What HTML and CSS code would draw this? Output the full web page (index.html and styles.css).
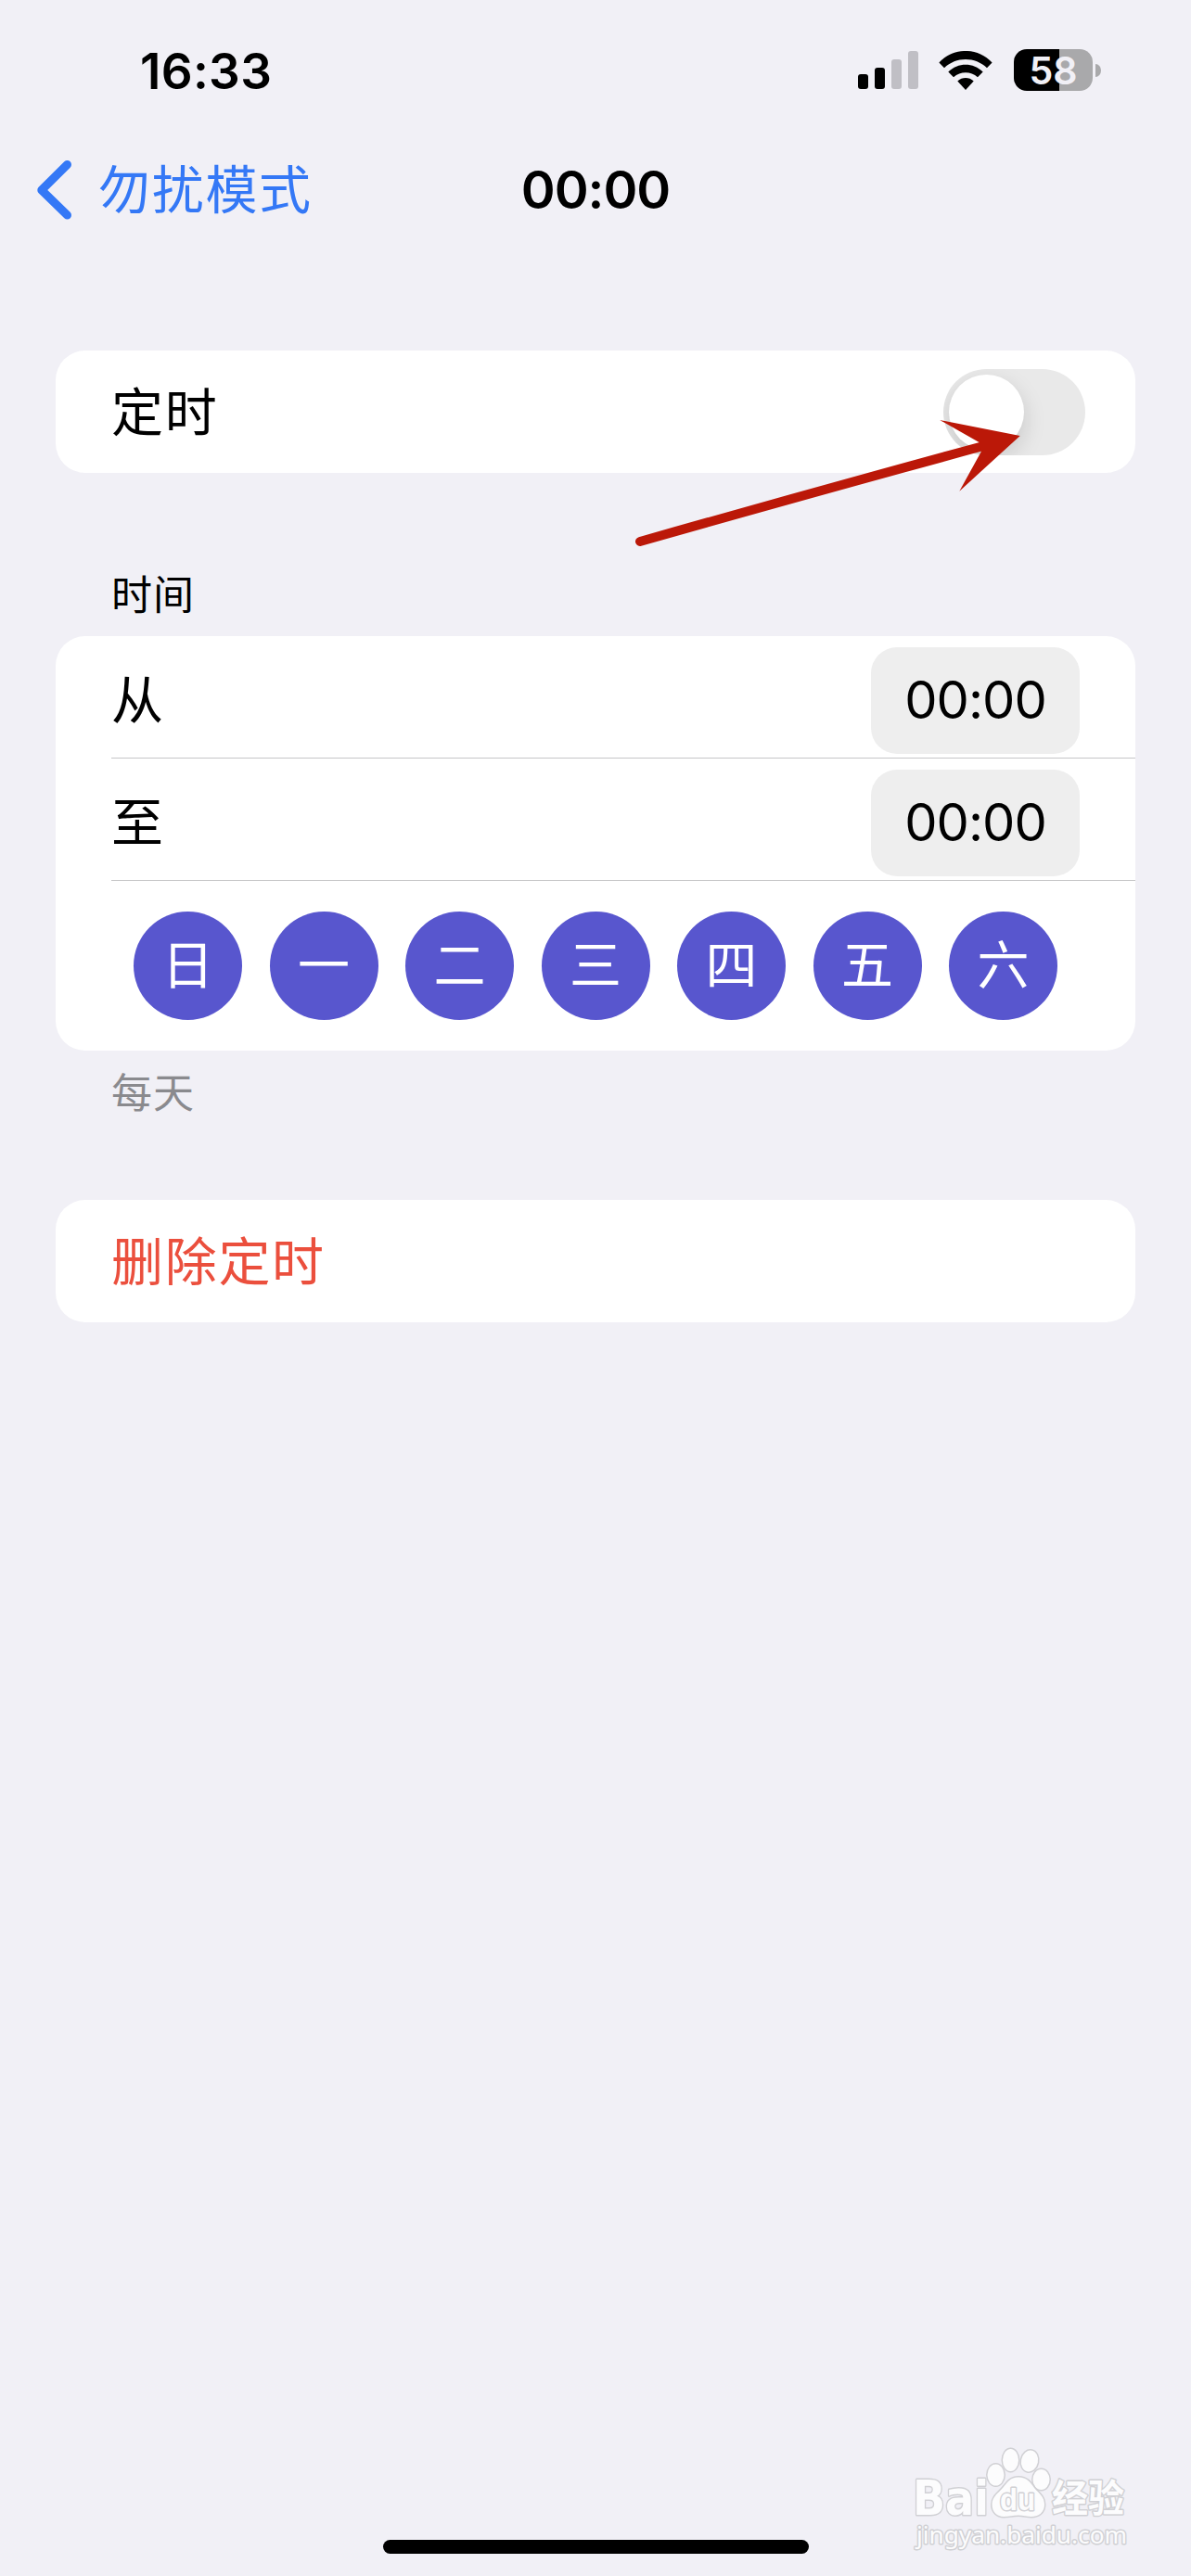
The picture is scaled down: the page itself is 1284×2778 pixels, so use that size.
FILE: index.html
```html
<!DOCTYPE html>
<html lang="zh-CN">
<head>
    <meta charset="UTF-8">
    <title>勿扰模式</title>
    <link rel="stylesheet" href="styles.css">
</head>
<body>
    <div class="status-bar">
        <span class="clock">16:33</span>
        <div class="status-icons">
            <svg class="signal" width="65" height="41" viewBox="0 0 65 41">
                <rect x="0" y="25" width="11" height="16" rx="3"/>
                <rect x="18" y="18" width="11" height="23" rx="3"/>
                <rect class="dim" x="36" y="9" width="11" height="32" rx="3"/>
                <rect class="dim" x="54" y="0" width="11" height="41" rx="3"/>
            </svg>
            <svg class="wifi" width="58" height="42" viewBox="0 0 58 42">
                <path d="M0.4 12.4C16-4.2 42-4.2 57.6 12.4L52 18.2C39.500 5.800 18.500 5.800 6 18.200Z"/>
                <path d="M10.300 22.500C20.800 12 37.200 12 47.700 22.500L42 28.300C34.500 21.500 23.500 21.500 16 28.300Z"/>
                <path d="M20.300 32.500C25.300 27.900 32.700 27.900 37.700 32.500L29 42Z"/>
            </svg>
            <div class="battery"><span>58</span></div>
            <div class="battery-cap"></div>
        </div>
    </div>

    <header class="nav">
        <a class="back">
            <svg width="38" height="64" viewBox="0 0 38 64"><path d="M32.500 4.500L4.800 32L32.500 59"/></svg>
            <span>勿扰模式</span>
        </a>
        <h1>00:00</h1>
    </header>

    <main>
        <section class="card row">
            <span>定时</span>
            <div class="switch"><div class="knob"></div></div>
        </section>

        <h2 class="section-title">时间</h2>
        <section class="card">
            <div class="row line">
                <span class="label">从</span>
                <span class="time">00:00</span>
            </div>
            <div class="row line">
                <span class="label">至</span>
                <span class="time">00:00</span>
            </div>
            <div class="days">
                <span>日</span>
                <span>一</span>
                <span>二</span>
                <span>三</span>
                <span>四</span>
                <span>五</span>
                <span>六</span>
            </div>
        </section>
        <p class="note">每天</p>

        <section class="card row delete">
            <span>删除定时</span>
        </section>
    </main>

    <!-- 指向开关的箭头 -->
    <svg class="arrow" width="420" height="150" viewBox="0 0 420 150">
        <path class="shaft" d="M10 134Q200 80 380 31"/>
        <path class="head" d="M419.700 20L333.200 3L376 27.300L378 36.700L354.300 79.700Z"/>
    </svg>

    <svg class="watermark" width="250" height="130" viewBox="0 0 250 130">
        <g class="mark">
            <text class="brand" x="4" y="81.500" textLength="82" lengthAdjust="spacingAndGlyphs">Bai</text>
            <ellipse cx="93.500" cy="39" rx="9" ry="11.500"/>
            <ellipse cx="109.500" cy="23" rx="8.500" ry="12"/>
            <ellipse cx="130" cy="24" rx="9" ry="11.500" transform="rotate(12 130 24)"/>
            <ellipse cx="142.500" cy="44" rx="9" ry="11"/>
            <path d="M118 41.500C127 41.500 131 47 135 53C140 59 146 62 146 71C146 80 139 84 132 84C127 84 123 82.500 118 82.500C112 82.500 108 84 102 84C95 84 89.500 79 89.500 71C89.500 62 97 58 101 53C106 47 109 41.500 118 41.500Z"/>
            <text class="du" x="98" y="77" textLength="38" lengthAdjust="spacingAndGlyphs">du</text>
            <text class="cn" x="154" y="78.500" textLength="78" lengthAdjust="spacingAndGlyphs">经验</text>
            <text class="site" x="8" y="113" textLength="227" lengthAdjust="spacingAndGlyphs">jingyan.baidu.com</text>
        </g>
    </svg>

    <div class="home-bar"></div>
</body>
</html>
```

FILE: styles.css
```css
* { box-sizing: border-box; }
body {
    position: relative;
    display: flex;
    flex-direction: column;
    width: 1284px;
    height: 2778px;
    margin: 0;
    overflow: hidden;
    background: #f1f0f6;
    color: #000;
    font-family: Inter, "Noto Sans CJK SC", sans-serif;
    font-size: 56px;
}
h1, h2, p { margin: 0; font-weight: 400; }

/* 状态栏 */
.status-bar {
    display: flex;
    justify-content: space-between;
    height: 150px;
    padding: 53px 97px 0 151px;
}
.clock { height: 48px; line-height: 49px; font-size: 53px; font-weight: 600; letter-spacing: 0.3px; }
.status-icons { display: flex; align-items: center; height: 45px; }
.signal { margin-right: 22px; }
.signal .dim { fill: #c0bfc5; }
.wifi { margin-right: 23px; }
.battery {
    width: 85px;
    height: 45px;
    border-radius: 14px;
    background: linear-gradient(to right, #000 49px, #a9a9ab 49px);
    color: #f1f0f6;
    font-size: 41px;
    font-weight: 600;
    line-height: 46px;
    text-align: center;
}
.battery-cap { width: 6px; height: 14px; margin-left: 3px; border-radius: 0 6px 6px 0 / 0 7px 7px 0; background: #a9a9ab; }

/* 导航栏 */
.nav {
    display: grid;
    grid-template-columns: 1fr auto 1fr;
    align-items: center;
    height: 110px;
    padding: 0 40px;
}
.back { display: flex; align-items: center; gap: 28px; color: #3478f6; letter-spacing: 1.7px; line-height: 80px; }
.back path { fill: none; stroke: #3478f6; stroke-width: 9; stroke-linecap: round; stroke-linejoin: round; }
.nav h1 { font-size: 56px; font-weight: 600; letter-spacing: -1px; line-height: 80px; }

/* 列表 */
main { padding: 118px 60px 0; }
.card { border-radius: 32px; background: #fff; }
.row {
    display: flex;
    align-items: center;
    justify-content: space-between;
    height: 132px;
    padding: 2px 60px 0;
    line-height: 80px;
    letter-spacing: 1.7px;
}
.line { margin-left: 60px; padding-left: 0; border-bottom: 1px solid #c6c6c8; }
.label { padding-top: 4px; }
.switch {
    width: 153px;
    height: 93px;
    margin: -2px -6px 0 0;
    padding: 6px;
    border-radius: 47px;
    background: #e9e9e9;
    overflow: hidden;
}
.knob { width: 81px; height: 81px; border-radius: 50%; background: #fff; box-shadow: 0 9px 24px rgba(0, 0, 0, 0.15); }
.section-title { height: 176px; padding: 99px 60px 0; font-size: 44px; line-height: 66px; letter-spacing: 1px; }
.time {
    width: 225px;
    height: 115px;
    margin-top: 6px;
    border-radius: 28px;
    background: #eee;
    line-height: 115px;
    text-align: center;
    letter-spacing: -1px;
}
.days { display: flex; justify-content: space-between; padding: 33px 84px; }
.days span {
    width: 117px;
    height: 117px;
    border-radius: 50%;
    background: #5856ce;
    color: #fff;
    line-height: 117px;
    text-align: center;
}
.note { height: 161px; padding: 13px 60px 0; color: #8a8a8e; font-size: 44px; line-height: 66px; letter-spacing: 1px; }
.delete { color: #eb4f3d; }

/* 覆盖在页面上的元素 */
.arrow { position: absolute; left: 680px; top: 450px; }
.arrow .shaft { fill: none; stroke: #bb1808; stroke-width: 10; stroke-linecap: round; }
.arrow .head { fill: #bb1808; }
.watermark { position: absolute; left: 980px; top: 2630px; }
.mark { fill: #fcfcfd; stroke: #d0d0d4; stroke-width: 3; stroke-linejoin: round; paint-order: stroke; }
.brand { font: bold 52px "DejaVu Sans", sans-serif; }
.du { font: bold 34px "Liberation Sans", sans-serif; }
.cn { font: bold 41px "Noto Sans CJK SC", sans-serif; }
.site { font: 26px "Noto Sans", sans-serif; }
.home-bar { width: 459px; height: 15px; margin: auto auto 24px 413px; border-radius: 8px; background: #000; }
```
